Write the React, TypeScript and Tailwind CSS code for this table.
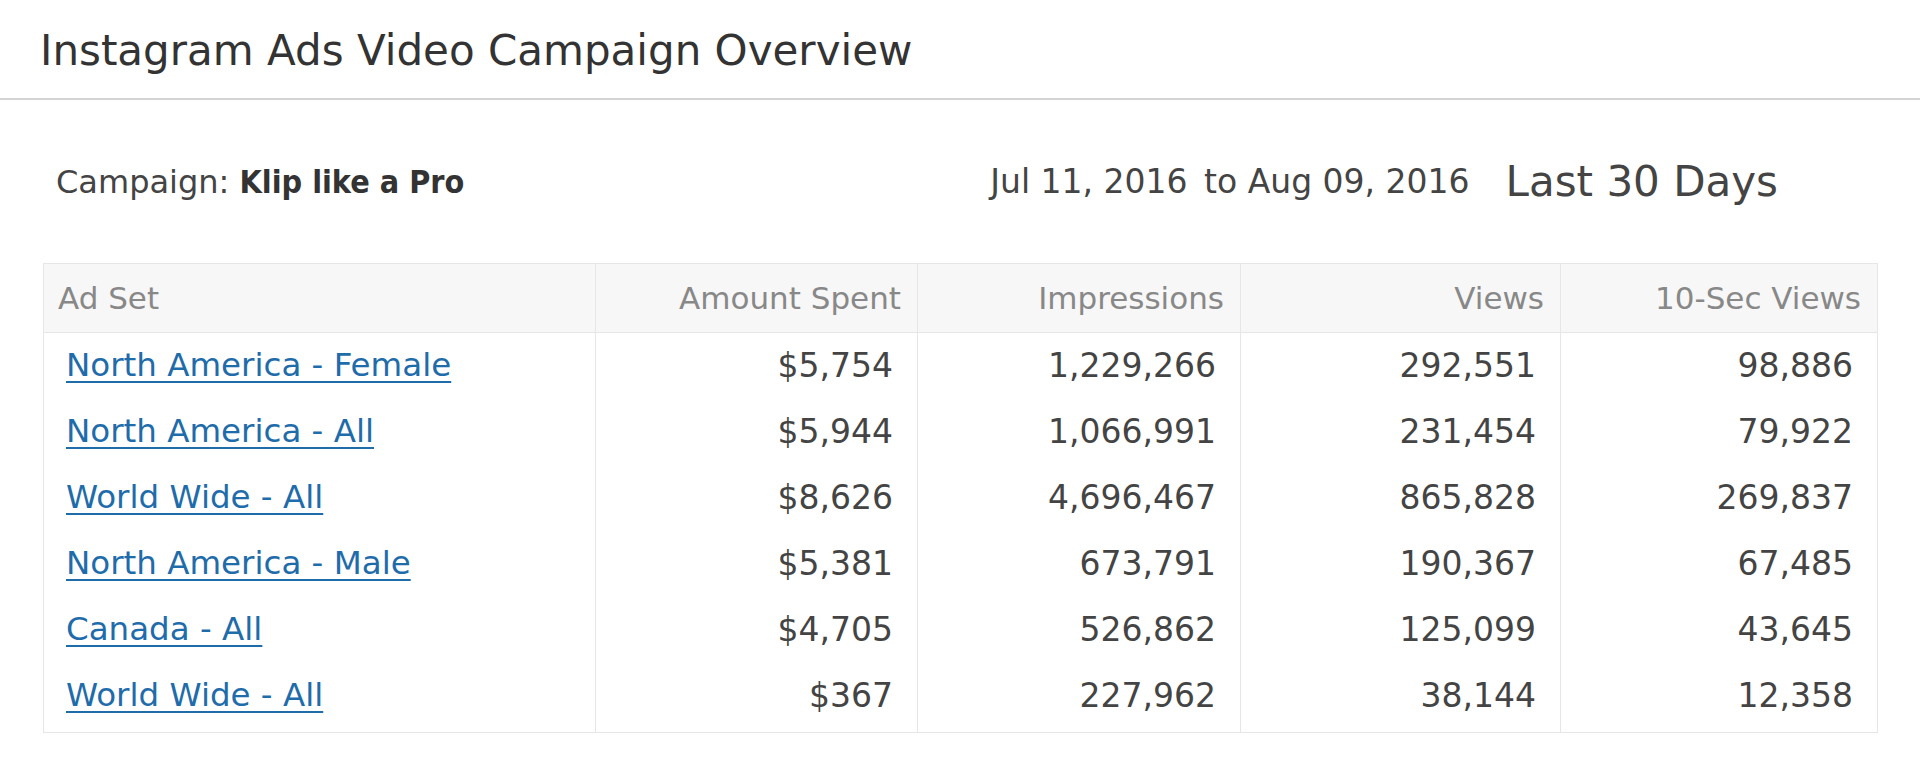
import React from "react";

const rows = [
  ["North America - Female", "$5,754", "1,229,266", "292,551", "98,886"],
  ["North America - All", "$5,944", "1,066,991", "231,454", "79,922"],
  ["World Wide - All", "$8,626", "4,696,467", "865,828", "269,837"],
  ["North America - Male", "$5,381", "673,791", "190,367", "67,485"],
  ["Canada - All", "$4,705", "526,862", "125,099", "43,645"],
  ["World Wide - All", "$367", "227,962", "38,144", "12,358"],
];

export default function App() {
  return (
    <div
      className="w-[1920px] h-[775px] bg-white text-[#444]"
      style={{ fontFamily: '"DejaVu Sans", sans-serif' }}
    >
      <div className="h-[100px] box-border pt-[26px] pl-[40px] border-b-2 border-[#d4d4d4]">
        <div className="text-[42px] leading-[50px] text-[#333]">Instagram Ads Video Campaign Overview</div>
      </div>

      <div className="mt-[57px] h-[50px] flex items-center pl-[56px] pr-[142px]">
        <div className="text-[32px] leading-[40px] text-[#444]">
          Campaign:{" "}
          <span
            className="font-bold text-[#333]"
            style={{ fontFamily: '"DejaVu Sans Condensed", "DejaVu Sans", sans-serif' }}
          >
            Klip like a Pro
          </span>
        </div>
        <div className="flex-1" />
        <div className="text-[33px] leading-[40px] text-[#444]">
          Jul 11, 2016 <span className="ml-[6px]">to</span> Aug 09, 2016
        </div>
        <div className="ml-[36px] text-[42px] leading-[50px] text-[#444]">Last 30 Days</div>
      </div>

      <div className="mt-[56px] pl-[43px]">
        <table className="table-fixed border-collapse w-[1834px] border border-[#e6e6e6]">
          <colgroup>
            <col className="w-[552px]" />
            <col className="w-[322px]" />
            <col className="w-[323px]" />
            <col className="w-[320px]" />
            <col className="w-[317px]" />
          </colgroup>
          <thead>
            <tr className="h-[69px] bg-[#f7f7f7] text-[31px] text-[#888]">
              <th className="border border-[#e6e6e6] text-left font-normal pl-[14px]">Ad Set</th>
              <th className="border border-[#e6e6e6] text-right font-normal pr-[16px]">Amount Spent</th>
              <th className="border border-[#e6e6e6] text-right font-normal pr-[16px]">Impressions</th>
              <th className="border border-[#e6e6e6] text-right font-normal pr-[16px]">Views</th>
              <th className="border border-[#e6e6e6] text-right font-normal pr-[16px]">10-Sec Views</th>
            </tr>
          </thead>
          <tbody className="text-[33px]">
            {rows.map((r, i) => {
              const last = i === rows.length - 1;
              return (
                <tr key={i} className={last ? "h-[70px]" : "h-[66px]"}>
                  <td className={`border-x border-[#e6e6e6] pl-[22px] text-[32.5px] ${last ? "pb-[4px]" : ""}`}>
                    <a href="#" className="text-[#1f6cab] underline underline-offset-[5px] decoration-2">
                      {r[0]}
                    </a>
                  </td>
                  {r.slice(1).map((v, j) => (
                    <td
                      key={j}
                      className={`border-x border-[#e6e6e6] text-right pr-[24px] text-[#444] ${last ? "pb-[4px]" : ""}`}
                    >
                      {v}
                    </td>
                  ))}
                </tr>
              );
            })}
          </tbody>
        </table>
      </div>
    </div>
  );
}
